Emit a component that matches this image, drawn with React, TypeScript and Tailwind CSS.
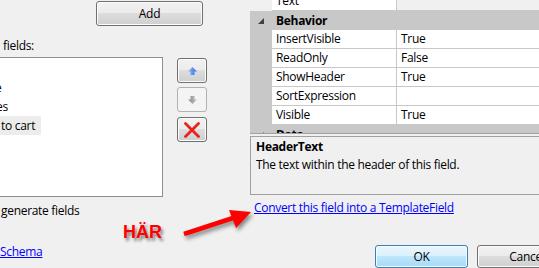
import React from 'react';

const font = { fontFamily: '"Open Sans", "Noto Sans", sans-serif' };

function AeroButton({ className = '', children }: { className?: string; children?: React.ReactNode }) {
  return (
    <div className={`rounded-[3px] border border-[#707070] bg-[linear-gradient(#f2f2f2_0%,#ebebeb_49%,#dddddd_50%,#cfcfcf_100%)] shadow-[inset_0_0_0_1px_#fcfcfc] flex items-center justify-center text-[12px] text-black ${className}`}>
      {children}
    </div>
  );
}

function UpArrow({ color = '#2f6fe0', light = '#8fb6ff' }: { color?: string; light?: string }) {
  return (
    <svg width="9" height="8" viewBox="0 0 9 8">
      <defs>
        <linearGradient id={`g${color}`} x1="0" y1="0" x2="1" y2="0">
          <stop offset="0" stopColor={light} />
          <stop offset="1" stopColor={color} />
        </linearGradient>
      </defs>
      <path d="M4.5 0 L9 4.5 L6.5 4.5 L6.5 8 L2.5 8 L2.5 4.5 L0 4.5 Z" fill={`url(#g${color})`} />
    </svg>
  );
}

function Row({ name, value, first = false }: { name: string; value?: string; first?: boolean }) {
  return (
    <div className={`flex h-[19px] ${first ? 'items-end' : ''}`}>
      <div className="w-[22px] shrink-0 bg-[#c8c8c8]" />
      <div className="w-[125px] shrink-0 bg-white border-b border-r border-[#c8c8c8] pl-[4px] leading-[18px]">{name}</div>
      <div className="flex-1 bg-white border-b border-[#c8c8c8] pl-[4px] leading-[18px]">{value}</div>
    </div>
  );
}

function Category({ name }: { name: string }) {
  return (
    <div className="flex h-[19px] items-center bg-[#c8c8c8]">
      <div className="w-[22px] shrink-0 flex justify-center">
        <svg width="6" height="6" viewBox="0 0 6 6">
          <path d="M6 0 L6 6 L0 6 Z" fill="#404040" />
        </svg>
      </div>
      <div className="pl-[4px] font-bold">{name}</div>
    </div>
  );
}

export default function App() {
  return (
    <div className="relative w-[539px] h-[268px] overflow-hidden bg-[#f0f0f0] flex text-[12px] tracking-[-0.3px] text-black" style={font}>
      {/* left column */}
      <div className="w-[250px] shrink-0 flex flex-col">
        <AeroButton className="ml-[96px] mt-[1px] w-[107px] h-[25px]">Add</AeroButton>
        <div className="mt-[12px] ml-[3px] leading-[15px]">fields:</div>
        <div className="mt-[4px] flex">
          <div className="ml-[-3px] w-[166px] h-[140px] bg-white border border-[#8e8f8f] pt-[1px] leading-[19px]">
            <div className="h-[19px]" />
            <div className="h-[19px] ml-[-3px]">e</div>
            <div className="h-[19px] ml-[-2px]">es</div>
            <div className="h-[19px]"><span className="inline-block bg-[#ececec] pl-[3px] pr-[6px]">to cart</span></div>
          </div>
          <div className="ml-[14px] mt-[1px] flex flex-col">
            <AeroButton className="w-[30px] h-[25px]"><UpArrow /></AeroButton>
            <div className="mt-[4px] w-[30px] h-[25px] rounded-[3px] border border-[#adb2b5] bg-[#f4f4f4] flex items-center justify-center">
              <div className="rotate-180"><UpArrow color="#8a8a8a" light="#c4c4c4" /></div>
            </div>
            <AeroButton className="mt-[5px] w-[30px] h-[25px] items-start pt-[4px]">
              <svg width="16" height="16" viewBox="0 0 16 16">
                <path d="M1.5 1.5 L14.5 14.5 M14.5 1.5 L1.5 14.5" stroke="#e8231c" strokeWidth="2.8" strokeLinecap="round" />
              </svg>
            </AeroButton>
          </div>
        </div>
        <div className="mt-[6px] ml-[1px] leading-[15px]">generate fields</div>
        <a className="mt-[26px] leading-[15px] text-[#0000ff] underline">Schema</a>
      </div>

      {/* right column */}
      <div className="w-[310px] shrink-0 flex flex-col">
        <div className="mt-[-8px] h-[144px] overflow-hidden border-b border-[#a0a0a0]">
          <Row name="Text" first />
          <Category name="Behavior" />
          <Row name="InsertVisible" value="True" />
          <Row name="ReadOnly" value="False" />
          <Row name="ShowHeader" value="True" />
          <Row name="SortExpression" />
          <Row name="Visible" value="True" />
          <Category name="Data" />
        </div>
        <div className="mt-[2px] h-[60px] border border-[#a0a0a0] pl-[5px] pt-[2px] leading-[15px]">
          <div className="font-bold">HeaderText</div>
          <div className="mt-[3px]">The text within the header of this field.</div>
        </div>
        <a className="mt-[5px] ml-[4px] leading-[15px] text-[#0000ff] underline">Convert this field into a TemplateField</a>
        <div className="mt-[30px] ml-[125px] flex gap-[9px]">
          <div className="w-[93px] h-[23px] shrink-0 rounded-[3px] border border-[#3c7fb1] bg-[linear-gradient(#eaf6fd_0%,#d9f0fc_49%,#bee6fd_50%,#a7d9f5_100%)] shadow-[inset_0_0_0_1px_#f6fbfe] flex items-center justify-center">OK</div>
          <AeroButton className="w-[100px] h-[23px] shrink-0">Cancel</AeroButton>
        </div>
      </div>

      {/* annotation */}
      <div className="absolute left-[123px] top-[222px] text-[18px] font-bold tracking-normal text-[#ff0000] leading-[20px] [text-shadow:2px_3px_3px_rgba(0,0,0,0.45)]" style={{ fontFamily: '"Liberation Sans", Arial, sans-serif' }}>
        HÄR
      </div>
      <svg className="absolute left-0 top-0 drop-shadow-[2px_3px_2px_rgba(0,0,0,0.45)]" width="539" height="268" viewBox="0 0 539 268">
        <path d="M184 234 L233 218" stroke="#ff0000" strokeWidth="4.5" strokeLinecap="butt" />
        <path d="M251 212 L229 210 L236 228 Z" fill="#ff0000" />
      </svg>
    </div>
  );
}
